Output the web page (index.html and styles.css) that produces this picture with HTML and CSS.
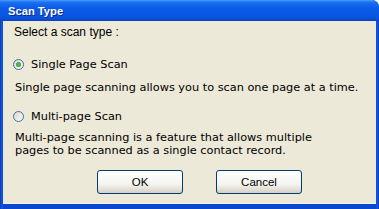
FILE: index.html
```html
<!DOCTYPE html>
<html>
<head>
<meta charset="utf-8">
<link rel="stylesheet" href="styles.css">
</head>
<body>
<div class="window">
  <div class="titlebar"><span class="title">Scan Type</span></div>
  <div class="frame">
    <div class="client">
      <div class="prompt">Select a scan type :</div>
      <label class="option">
        <span class="radio"><span class="dot"></span></span>
        <span>Single Page Scan</span>
      </label>
      <p class="desc">Single page scanning allows you to scan one page at a time.</p>
      <label class="option">
        <span class="radio"></span>
        <span>Multi-page Scan</span>
      </label>
      <p class="desc multi">Multi-page scanning is a feature that allows multiple<br>pages to be scanned as a single contact record.</p>
      <div class="buttons">
        <button class="btn">OK</button>
        <button class="btn">Cancel</button>
      </div>
    </div>
  </div>
</div>
</body>
</html>
```
FILE: styles.css
```css
html, body { margin: 0; padding: 0; }
body { width: 379px; height: 209px; overflow: hidden; background: #ffffff; }
.window {
  width: 379px; height: 209px;
  display: flex; flex-direction: column;
  background: #0a46d4;
  border-radius: 0 7px 0 0;
  overflow: hidden;
}
.titlebar {
  height: 21px; flex: none;
  background: linear-gradient(#4a9bff 0%, #1a6ff0 12%, #0a5ae8 40%, #0a56e2 75%, #0a4fd8 90%, #0a3fb8 100%);
  display: flex; align-items: center;
  padding-left: 8px;
}
.title {
  font-family: "Liberation Sans", Arial, sans-serif;
  font-weight: bold; font-size: 11.2px; color: #fff;
  text-shadow: 1px 1px 0 #0a2a90;
}
.frame {
  flex: 1;
  padding: 0 3px 5px 3px;
  display: flex;
  background: linear-gradient(90deg, #0a3cc0 0, #1658dc 2px, #0a48d0 3px, #0a48d0 376px, #1658dc 377px, #0a3cc0 379px);
}
.client {
  flex: 1;
  background: #ece9d8;
  border-bottom: 1px solid #f4f2ea;
  font-family: "DejaVu Sans", Verdana, sans-serif;
  font-size: 11.3px; color: #000;
  padding: 4px 0 0 11px;
  display: flex; flex-direction: column;
}
.prompt {
  font-family: "Liberation Sans", Arial, sans-serif; font-size: 12px;
  height: 15px; line-height: 15px;
  margin-bottom: 17px;
}
.option { display: flex; align-items: center; gap: 7px; height: 14px; margin-left: -1px; }
.radio {
  width: 11px; height: 11px; box-sizing: border-box; flex: none;
  border: 1px solid #4a6a96; border-radius: 50%;
  background: linear-gradient(135deg, #d8d8d0, #fafafa);
  display: flex; align-items: center; justify-content: center;
}
.dot { width: 5px; height: 5px; border-radius: 50%; background: radial-gradient(#5cc45a, #2a8e2a); }
.desc { margin: 10px 0 14px 1px; line-height: 14px; }
.desc.multi { margin: 8px 0 0 1px; line-height: 13px; }
.buttons { display: flex; gap: 33px; margin-left: 83px; margin-top: 13px; }
.btn {
  width: 86px; height: 24px;
  font-family: "Liberation Sans", Arial, sans-serif; font-size: 11.5px; color: #000;
  border: 1px solid #003c74; border-radius: 3px;
  background: linear-gradient(#fff, #f4f4f0 60%, #d6d0c5);
}
```
